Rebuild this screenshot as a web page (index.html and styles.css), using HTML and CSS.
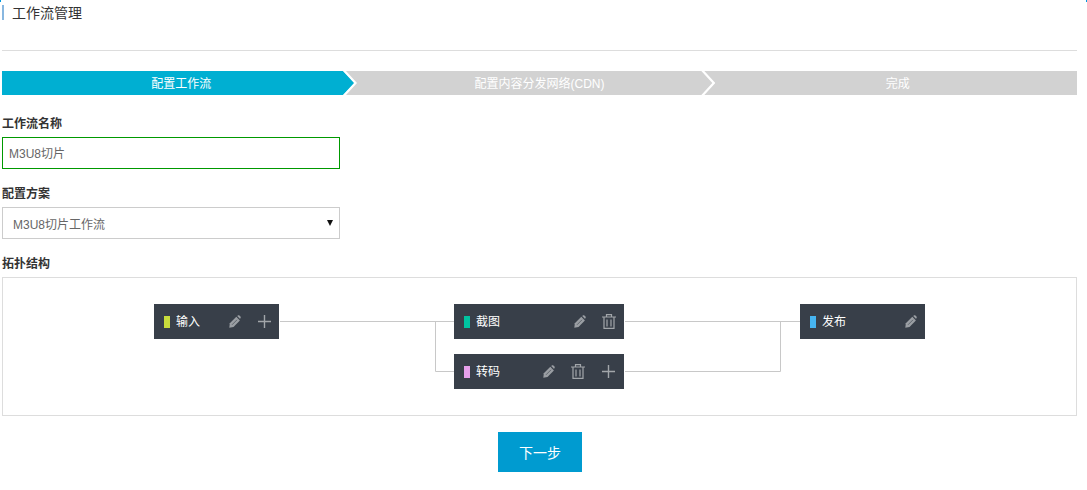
FILE: index.html
```html
<!DOCTYPE html>
<html lang="zh">
<head>
<meta charset="utf-8">
<title>工作流管理</title>
<link rel="stylesheet" href="styles.css">
</head>
<body>
<span class="corner corner-l"></span>
<span class="corner corner-r"></span>
<main class="page">
  <header class="head"><h1 class="title">工作流管理</h1></header>
  <ol class="steps">
    <li class="step step-active"><span class="step-text">配置工作流</span></li>
    <li class="step"><span class="step-text">配置内容分发网络(CDN)</span></li>
    <li class="step step-last"><span class="step-text">完成</span></li>
  </ol>
  <section class="field field-first">
    <label class="label">工作流名称</label>
    <div class="input">M3U8切片</div>
  </section>
  <section class="field">
    <label class="label">配置方案</label>
    <div class="select"><span class="select-text">M3U8切片工作流</span><span class="arrow"></span></div>
  </section>
  <section class="field">
    <label class="label">拓扑结构</label>
    <div class="canvas">
      <svg class="wires" width="1073" height="137" viewBox="0 0 1073 137" fill="none" stroke="#c8c8c8">
        <path d="M277 43.5H451"/>
        <path d="M432.5 43.5V93.5H451"/>
        <path d="M622 43.5H797"/>
        <path d="M622 93.5H777.5V43.5"/>
      </svg>
      <div class="node node-input">
        <i class="dot dot-lime"></i><span class="name">输入</span>
        <svg class="ic ic-pen"><use href="#pen"/></svg>
        <svg class="ic ic-plus"><use href="#plus"/></svg>
      </div>
      <div class="node node-shot">
        <i class="dot dot-green"></i><span class="name">截图</span>
        <svg class="ic ic-pen"><use href="#pen"/></svg>
        <svg class="ic ic-trash"><use href="#trash"/></svg>
      </div>
      <div class="node node-trans">
        <i class="dot dot-pink"></i><span class="name">转码</span>
        <svg class="ic ic-pen"><use href="#pen"/></svg>
        <svg class="ic ic-trash"><use href="#trash"/></svg>
        <svg class="ic ic-plus"><use href="#plus"/></svg>
      </div>
      <div class="node node-pub">
        <i class="dot dot-blue"></i><span class="name">发布</span>
        <svg class="ic ic-pen"><use href="#pen"/></svg>
      </div>
    </div>
  </section>
  <div class="actions"><button class="next" type="button">下一步</button></div>
</main>
<svg width="0" height="0" class="defs">
  <symbol id="pen" viewBox="0 0 12 13">
    <path d="M.3 12.7L.8 8.2 7.3 1.8l3.6 3.6-6.4 6.7z" fill="#9a9ea3"/>
    <path d="M8.2 1l.6-.5c.5-.4 1.2-.4 1.6 0l1.1 1.1c.4.4.4 1.1 0 1.6l-.6.6z" fill="#9a9ea3"/>
    <path d="M3 9.8l5-5" stroke="#383f49" stroke-width=".6" fill="none"/>
  </symbol>
  <symbol id="plus" viewBox="0 0 13 13">
    <path d="M6.5 0v13M0 6.5h13" stroke="#a2a6aa" stroke-width="1.4" fill="none"/>
  </symbol>
  <symbol id="trash" viewBox="0 0 14 15">
    <path d="M0 3h14M4.5 2.5V.6h5v1.9M2 3v11.4h10V3M5 5.5v7M9 5.5v7" stroke="#a2a6aa" stroke-width="1.2" fill="none"/>
  </symbol>
</svg>
</body>
</html>
```
FILE: styles.css
```css
* { box-sizing: border-box; }
html, body { margin: 0; padding: 0; height: 490px; overflow: hidden; background: #fff; }
body { font-family: "Liberation Sans", "Noto Sans CJK SC", sans-serif; font-size: 12px; color: #333; position: relative; }
.defs { position: absolute; }
.corner { position: absolute; top: 0; width: 1px; height: 2px; background: #0099e0; }
.corner-l { left: 0; }
.corner-r { right: 0; }
.page { width: 1075px; margin-left: 2px; }
.head { height: 51px; padding-top: 5px; border-bottom: 1px solid #ddd; }
.title { margin: 0; height: 15px; border-left: 2px solid #88b7e0; padding-left: 8px; font-size: 14px; line-height: 16px; font-weight: 400; color: #333; }

.steps { display: flex; list-style: none; margin: 20px 0 0; padding: 0; height: 24px; background: #d2d2d2; }
.step { position: relative; flex: 1 1 0; color: #fff; text-align: center; line-height: 26px; }
.step-text { position: relative; z-index: 2; }
.step-active::before { content: ""; position: absolute; top: 0; left: 0; width: 353px; height: 24px; background: #00afd2; clip-path: polygon(0 0, 341px 0, 100% 50%, 341px 100%, 0 100%); }
.step:not(.step-last)::after { content: ""; position: absolute; z-index: 1; top: 0; left: 341px; width: 14px; height: 24px; background: #fff; clip-path: polygon(0 0, 3px 0, 100% 50%, 3px 100%, 0 100%, 11px 50%); }

.field { margin-top: 16px; }
.field-first { margin-top: 20px; }
.label { display: block; height: 22px; line-height: 18px; font-weight: 700; font-size: 12px; color: #333; }
.input, .select { width: 338px; height: 32px; color: #666; background: #fff; }
.input { border: 1px solid #009900; padding-left: 6px; line-height: 32px; }
.select { display: flex; justify-content: space-between; align-items: center; border: 1px solid #ccc; padding: 0 6px 0 10px; }
.arrow { width: 0; height: 0; border: 3px solid transparent; border-top: 6px solid #111; border-bottom: 0; }

.canvas { position: relative; height: 139px; border: 1px solid #ddd; }
.wires { position: absolute; left: 0; top: 0; }
.node { position: absolute; display: flex; align-items: center; height: 35px; background: #383f49; color: #fff; padding: 0 8px 0 10px; }
.node-input { left: 151px; top: 26px; width: 125px; }
.node-shot { left: 451px; top: 26px; width: 170px; }
.node-trans { left: 451px; top: 76px; width: 170px; }
.node-pub { left: 797px; top: 26px; width: 125px; }
.dot { width: 6px; height: 12px; margin-right: 6px; }
.dot-lime { background: #c8dc3c; }
.dot-green { background: #00c3a0; }
.dot-pink { background: #e6a0eb; }
.dot-blue { background: #46b4f0; }
.name { flex: 1; font-size: 12px; padding-bottom: 2px; }
.ic { display: block; flex: none; }
.ic-pen { width: 12px; height: 13px; }
.ic-plus { width: 13px; height: 13px; margin-left: 17px; margin-top: -1px; }
.ic-trash { width: 14px; height: 15px; margin-left: 16px; margin-top: -1px; }
.node-trans .ic-plus { margin-right: 1px; }

.actions { display: flex; justify-content: center; margin-top: 16px; padding-left: 1px; }
.next { width: 84px; height: 40px; border: 0; padding: 0; background: #009bd0; color: #fff; font: inherit; font-size: 14px; }
```
